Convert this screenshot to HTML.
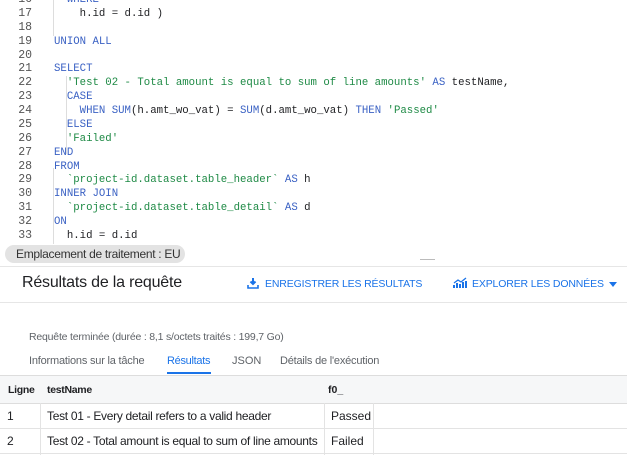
<!DOCTYPE html>
<html><head><meta charset="utf-8"><style>
*{margin:0;padding:0;box-sizing:border-box}
body{width:627px;height:458px;background:#fff;font-family:"Liberation Sans",sans-serif;position:relative;overflow:hidden}
.code{position:absolute;left:0;top:0;width:627px;height:243px;font-family:"Liberation Mono",monospace;font-size:10.7px;color:#202124}
.ln{position:absolute;left:0;width:32px;text-align:right;color:#555;font-size:11.5px}
.tx{position:absolute;left:54px;white-space:pre}
.k{color:#3b62c4}.s{color:#1e8a45}
.bar{position:absolute;left:53px;width:1px;background:#ddd}
.abs{position:absolute;white-space:nowrap}
</style></head><body>
<div class="code" id="c"></div>
<div class="bar" style="left:53px;top:0;height:36px"></div>
<div class="bar" style="left:53px;top:168px;height:76px"></div>
<div class="bar" style="left:66px;top:76px;height:78px"></div>
<div class="abs" style="left:5px;top:245px;width:180px;height:18px;background:#e3e3e3;border-radius:9px;font-size:12px;color:#333;line-height:18px;padding-left:11px;letter-spacing:-0.3px">Emplacement de traitement : EU</div>
<div class="abs" style="left:420px;top:259px;width:15px;height:1px;background:#bbb"></div>
<div class="abs" style="left:0;top:266px;width:627px;height:1px;background:#e6e6e6"></div>
<div class="abs" style="left:22px;top:274px;font-size:16px;color:#202124;letter-spacing:-0.2px">Résultats de la requête</div>
<svg class="abs" style="left:247px;top:277px" width="12" height="12" viewBox="0 0 12 12"><path d="M6 1v6M3.5 4.5L6 7l2.5-2.5" stroke="#1a73e8" stroke-width="2" fill="none"/><path d="M1 8v3h10V8" stroke="#1a73e8" stroke-width="1.6" fill="none"/></svg>
<div class="abs" style="left:265px;top:278px;font-size:10.5px;color:#1a73e8;letter-spacing:-0.15px">ENREGISTRER LES RÉSULTATS</div>
<svg class="abs" style="left:453px;top:277px" width="14" height="12" viewBox="0 0 14 12"><path d="M1 11V8M4 11V6M7 11V7M10 11V5M13 11V4" stroke="#1a73e8" stroke-width="2"/><path d="M1 6l4-3 3 2 5-4" stroke="#1a73e8" stroke-width="1.3" fill="none"/></svg>
<div class="abs" style="left:472px;top:278px;font-size:10.5px;color:#1a73e8;letter-spacing:-0.15px">EXPLORER LES DONNÉES</div>
<div class="abs" style="left:609px;top:282px;width:0;height:0;border-left:4px solid transparent;border-right:4px solid transparent;border-top:5px solid #1a73e8"></div>
<div class="abs" style="left:0;top:302px;width:627px;height:1px;background:#e6e6e6"></div>
<div class="abs" style="left:29px;top:331px;font-size:10.5px;color:#5f6368;letter-spacing:-0.2px">Requête terminée (durée : 8,1 s/octets traités : 199,7 Go)</div>
<div class="abs" style="left:29px;top:355px;font-size:11px;color:#5f6368;letter-spacing:-0.2px">Informations sur la tâche</div>
<div class="abs" style="left:167px;top:355px;font-size:11px;color:#1a73e8;letter-spacing:-0.3px">Résultats</div>
<div class="abs" style="left:167px;top:372px;width:44px;height:2px;background:#1a73e8"></div>
<div class="abs" style="left:232px;top:355px;font-size:11px;color:#5f6368">JSON</div>
<div class="abs" style="left:280px;top:355px;font-size:11px;color:#5f6368;letter-spacing:-0.2px">Détails de l'exécution</div>
<div class="abs" style="left:0;top:375px;width:627px;height:29px;background:#f6f7f8;border-top:1px solid #ddd;border-bottom:1px solid #ddd"></div>
<div class="abs" style="left:8px;top:384px;font-size:10.5px;color:#202124;font-weight:bold;letter-spacing:-0.3px">Ligne</div>
<div class="abs" style="left:47px;top:384px;font-size:10.5px;color:#202124;font-weight:bold;letter-spacing:-0.3px">testName</div>
<div class="abs" style="left:328px;top:384px;font-size:10.5px;color:#202124;font-weight:bold">f0_</div>
<div class="abs" style="left:0;top:428px;width:627px;height:1px;background:#e3e3e3"></div>
<div class="abs" style="left:0;top:453px;width:627px;height:1px;background:#e3e3e3"></div>
<div class="abs" style="left:40px;top:403px;width:1px;height:52px;background:#e3e3e3"></div>
<div class="abs" style="left:324px;top:403px;width:1px;height:52px;background:#e3e3e3"></div>
<div class="abs" style="left:373px;top:403px;width:1px;height:52px;background:#e3e3e3"></div>
<div class="abs" style="left:7px;top:409px;font-size:12px;color:#202124">1</div>
<div class="abs" style="left:47px;top:409px;font-size:12px;color:#202124;letter-spacing:-0.3px">Test 01 - Every detail refers to a valid header</div>
<div class="abs" style="left:331px;top:409px;font-size:12px;color:#202124">Passed</div>
<div class="abs" style="left:7px;top:434px;font-size:12px;color:#202124">2</div>
<div class="abs" style="left:47px;top:434px;font-size:12px;color:#202124;letter-spacing:-0.3px">Test 02 - Total amount is equal to sum of line amounts</div>
<div class="abs" style="left:331px;top:434px;font-size:12px;color:#202124">Failed</div>
<script>
var L=[
[16,'<span class="k">  WHERE</span>'],
[17,'    h.id = d.id )'],
[18,''],
[19,'<span class="k">UNION ALL</span>'],
[20,''],
[21,'<span class="k">SELECT</span>'],
[22,'  <span class="s">\'Test 02 - Total amount is equal to sum of line amounts\'</span> <span class="k">AS</span> testName,'],
[23,'  <span class="k">CASE</span>'],
[24,'    <span class="k">WHEN SUM</span>(h.amt_wo_vat) = <span class="k">SUM</span>(d.amt_wo_vat) <span class="k">THEN</span> <span class="s">\'Passed\'</span>'],
[25,'  <span class="k">ELSE</span>'],
[26,'  <span class="s">\'Failed\'</span>'],
[27,'<span class="k">END</span>'],
[28,'<span class="k">FROM</span>'],
[29,'  <span class="s">`project-id.dataset.table_header`</span> <span class="k">AS</span> h'],
[30,'<span class="k">INNER JOIN</span>'],
[31,'  <span class="s">`project-id.dataset.table_detail`</span> <span class="k">AS</span> d'],
[32,'<span class="k">ON</span>'],
[33,'  h.id = d.id']];
var h='';L.forEach(function(r,i){var t=-6+i*13.875;h+='<div class="ln" style="top:'+(t-1)+'px">'+r[0]+'</div><div class="tx" style="top:'+t+'px">'+r[1]+'</div>';});
document.getElementById('c').innerHTML=h;
</script>
</body></html>
